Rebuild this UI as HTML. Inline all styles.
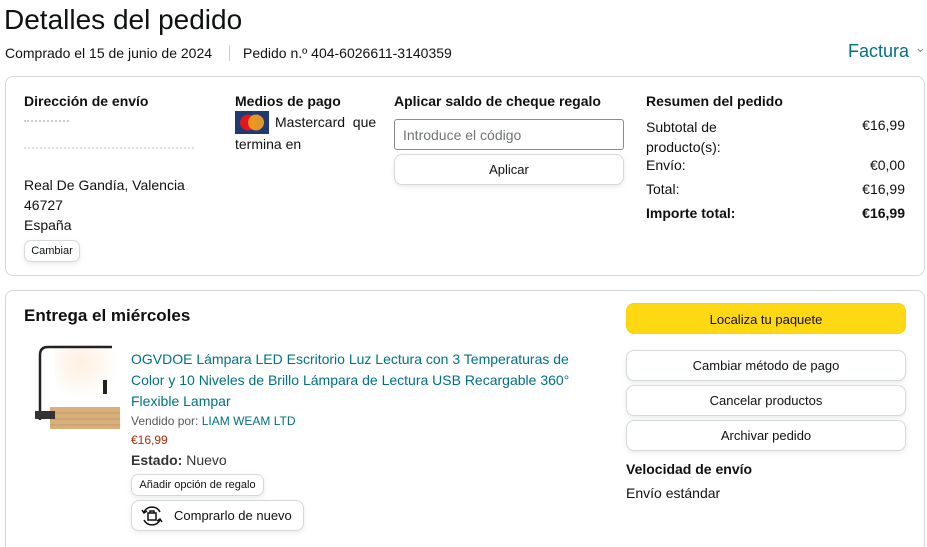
<!DOCTYPE html>
<html style="width:927px;height:547px;overflow:hidden"><head><meta charset="utf-8"><style>
*{box-sizing:border-box;margin:0;padding:0}
body{width:927px;height:547px;overflow:hidden;background:#fff;font-family:"Liberation Sans",Arial,sans-serif;color:#0f1111;position:relative}
.a{position:absolute;white-space:nowrap}
.box{position:absolute;border:1px solid #d5d9d9;border-radius:8px}
.b{font-weight:bold}
.t14{font-size:14px}
.btn{position:absolute;border:1px solid #d5d9d9;border-radius:8px;background:#fff;box-shadow:0 2px 5px rgba(213,217,217,.5);font-size:13px;text-align:center}
.link{color:#007185}
</style></head><body>
<div class="a" style="left:4px;top:4px;font-size:28px">Detalles del pedido</div>
<div class="a t14" style="left:5px;top:45px">Comprado el 15 de junio de 2024</div>
<div class="a" style="left:229px;top:45px;width:1px;height:16px;background:#ccc"></div>
<div class="a t14" style="left:243px;top:45px">Pedido n.º 404-6026611-3140359</div>
<div class="a link" style="left:848px;top:41px;font-size:18px">Factura</div>
<div class="a" style="left:915px;top:40px;font-size:13px;color:#888">⌄</div>

<div class="box" style="left:5px;top:76px;width:920px;height:200px"></div>
<div class="a t14 b" style="left:24px;top:93px">Dirección de envío</div>
<div class="a" style="left:24px;top:120px;width:45px;height:3px;border-top:2px dotted #ccc"></div>
<div class="a" style="left:24px;top:147px;width:170px;height:3px;border-top:2px dotted #ddd"></div>
<div class="a t14" style="left:24px;top:177px">Real De Gandía, Valencia</div>
<div class="a t14" style="left:24px;top:197px">46727</div>
<div class="a t14" style="left:24px;top:217px">España</div>
<div class="btn" style="left:24px;top:240px;width:56px;height:22px;font-size:11px;line-height:20px;border-radius:7px">Cambiar</div>

<div class="a t14 b" style="left:235px;top:93px">Medios de pago</div>
<svg class="a" style="left:235px;top:111px" width="34" height="23"><rect width="34" height="23" fill="#1d3a73"/><circle cx="13" cy="11.5" r="8" fill="#e3141d"/><circle cx="21" cy="11.5" r="8" fill="#f5a221" opacity=".9"/></svg>
<div class="a t14" style="left:275px;top:114px">Mastercard&nbsp; que</div>
<div class="a t14" style="left:235px;top:136px">termina en</div>

<div class="a t14 b" style="left:394px;top:93px">Aplicar saldo de cheque regalo</div>
<div class="a" style="left:394px;top:119px;width:230px;height:31px;border:1px solid #888c8c;border-radius:3px;font-size:14px;color:#6f7373;padding:7px 8px">Introduce el código</div>
<div class="btn" style="left:394px;top:154px;width:230px;height:31px;line-height:29px">Aplicar</div>

<div class="a t14 b" style="left:646px;top:93px">Resumen del pedido</div>
<div class="a t14" style="left:646px;top:117px;line-height:20px;white-space:normal;width:120px">Subtotal de<br>producto(s):</div>
<div class="a t14" style="right:22px;top:117px">€16,99</div>
<div class="a t14" style="left:646px;top:157px">Envío:</div>
<div class="a t14" style="right:22px;top:157px">€0,00</div>
<div class="a t14" style="left:646px;top:181px">Total:</div>
<div class="a t14" style="right:22px;top:181px">€16,99</div>
<div class="a t14 b" style="left:646px;top:205px">Importe total:</div>
<div class="a t14 b" style="right:22px;top:205px">€16,99</div>

<div class="box" style="left:5px;top:290px;width:920px;height:270px"></div>
<div class="a b" style="left:24px;top:306px;font-size:17px">Entrega el miércoles</div>
<svg class="a" style="left:30px;top:345px" width="92" height="90">
<defs><radialGradient id="g" cx=".4" cy=".3" r=".6"><stop offset="0" stop-color="#fdf0e0"/><stop offset="1" stop-color="#fff"/></radialGradient></defs>
<rect x="25" y="0" width="65" height="60" fill="url(#g)"/>
<path d="M10 75 V10 Q10 2 18 2 H82" stroke="#222" stroke-width="2.5" fill="none"/>
<rect x="20" y="62" width="70" height="22" fill="#d9b07c"/>
<path d="M20 68H90M20 74H90M20 80H90" stroke="#c49a62" stroke-width="1"/>
<rect x="5" y="66" width="20" height="8" fill="#333"/>
<rect x="73" y="35" width="4" height="14" fill="#222"/>
</svg>
<div class="a t14 link" style="left:131px;top:349px;line-height:21px;white-space:normal;width:450px">OGVDOE Lámpara LED Escritorio Luz Lectura con 3 Temperaturas de Color y 10 Niveles de Brillo Lámpara de Lectura USB Recargable 360° Flexible Lampar</div>
<div class="a" style="left:131px;top:414px;font-size:12px;color:#565959">Vendido por: <span class="link">LIAM WEAM LTD</span></div>
<div class="a" style="left:131px;top:433px;font-size:12px;color:#b12704">€16,99</div>
<div class="a t14" style="left:131px;top:452px;color:#333"><b>Estado:</b> Nuevo</div>
<div class="btn" style="left:131px;top:474px;width:133px;height:22px;font-size:11px;line-height:20px;border-radius:7px">Añadir opción de regalo</div>
<div class="btn" style="left:131px;top:500px;width:173px;height:31px;font-size:13px;line-height:29px;text-align:left;padding-left:42px">Comprarlo de nuevo</div>
<svg class="a" style="left:139px;top:503px" width="26" height="26" fill="none" stroke="#111" stroke-width="1.5"><path d="M5 9 A9 9 0 0 1 21 9"/><path d="M21 17 A9 9 0 0 1 5 17"/><path d="M3 7 L5 10 L8 8"/><path d="M23 19 L21 16 L18 18"/><rect x="9" y="10" width="8" height="7"/><path d="M11 10 V8 H15 V10"/></svg>

<div class="btn" style="left:626px;top:303px;width:280px;height:31px;line-height:31px;background:#ffd814;border-color:#fcd200;box-shadow:none">Localiza tu paquete</div>
<div class="btn" style="left:626px;top:350px;width:280px;height:31px;line-height:29px">Cambiar método de pago</div>
<div class="btn" style="left:626px;top:385px;width:280px;height:31px;line-height:29px">Cancelar productos</div>
<div class="btn" style="left:626px;top:420px;width:280px;height:31px;line-height:29px">Archivar pedido</div>
<div class="a t14 b" style="left:626px;top:461px">Velocidad de envío</div>
<div class="a t14" style="left:626px;top:485px">Envío estándar</div>
</body></html>
